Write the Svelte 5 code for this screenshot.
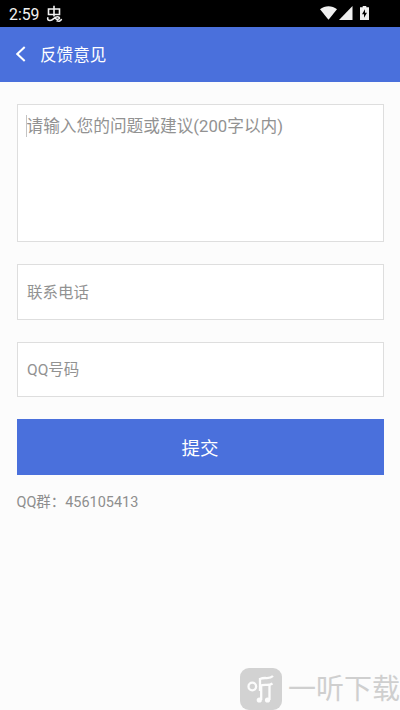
<script lang="ts">
	let content = $state('');
	let phone = $state('');
	let qq = $state('');

	function submit(e: Event) {
		e.preventDefault();
	}
</script>

<div class="page">
	<div class="status">
		<span class="time">2:59</span>
		<svg class="bug" width="17" height="18" viewBox="0 0 17 18" aria-hidden="true">
			<path d="M2.5 4h11v5.5h-11zM8 .8v10.7M2 12.2c-1 2.300.2 3.300 2 3.300 3.500 0 4-3.800 7.500-3.800 2.500 0 2.500 2.300.5 2.600-2 .2-2.500-1-2.500-1M10.500 15.800c2.500.8 4.500.5 5-2" />
		</svg>
		<div class="signals">
			<svg width="17" height="14" viewBox="0 0 17 14" aria-hidden="true">
				<path d="M0 3.2C5 -.8 12 -.8 17 3.2L8.5 13.8z" />
			</svg>
			<svg class="cell" width="14" height="14" viewBox="0 0 14 14" aria-hidden="true">
				<path d="M13.5 0v14H0z" />
			</svg>
			<svg class="battery" width="9" height="14" viewBox="0 0 9 14" aria-hidden="true">
				<path d="M2.7 0h3.6v1.3H9V14H0V1.3h2.7z" />
				<path class="bolt" d="M5 3.2L2 8.2h2v3.6l3-5H5z" />
			</svg>
		</div>
	</div>

	<header>
		<button class="back" aria-label="返回">
			<svg width="10" height="16" viewBox="0 0 10 16">
				<path d="M8.7 1L1.3 8l7.4 7" />
			</svg>
		</button>
		<h1>反馈意见</h1>
	</header>

	<form onsubmit={submit}>
		<div class="message">
			<textarea bind:value={content} maxlength="200" placeholder="请输入您的问题或建议(200字以内)"></textarea>
			<span class="caret"></span>
		</div>
		<input bind:value={phone} type="tel" placeholder="联系电话" />
		<input bind:value={qq} placeholder="QQ号码" />
		<button class="submit">提交</button>
		<p>QQ群：456105413</p>
	</form>

	<div class="watermark">
		<svg width="42" height="42" viewBox="0 0 42 42" aria-hidden="true">
			<rect width="42" height="42" rx="9" />
			<circle cx="12.3" cy="18.5" r="3.8" />
			<path d="M33 8c-4 4-8 .5-13 3M20 10v13M32.5 15.5c-4 3-8 0-12.500 2.500M21.200 17v15M29.500 17v15" />
			<circle class="note" cx="19.3" cy="32" r="2.6" />
			<circle class="note" cx="27.5" cy="32" r="2.6" />
		</svg>
		<span>一听下载</span>
	</div>
</div>

<style>
	:global(body) {
		margin: 0;
	}
	.page {
		position: relative;
		height: 710px;
		overflow: hidden;
		background: #fcfcfc;
		font-family: Roboto, 'Noto Sans CJK SC', sans-serif;
	}

	.status {
		display: flex;
		align-items: center;
		box-sizing: border-box;
		height: 27px;
		padding: 0 31px 0 9px;
		background: #000;
		color: #f2f2f2;
	}
	.time {
		width: 37px;
		padding-top: 2px;
		font-size: 15.8px;
		line-height: 25px;
	}
	.bug {
		fill: none;
		stroke: #f2f2f2;
		stroke-width: 1.6;
	}
	.signals {
		display: flex;
		align-items: center;
		margin: -1px 0 0 auto;
		fill: #f0f0f0;
	}
	.cell {
		margin-left: 2px;
	}
	.battery {
		margin-left: 7px;
	}
	.bolt {
		fill: #000;
	}

	header {
		display: flex;
		align-items: center;
		height: 55px;
		padding-left: 16px;
		background: #4a70dc;
		color: #fff;
	}
	button {
		border: 0;
		color: #fff;
		font-family: inherit;
	}
	.back {
		display: flex;
		width: 24px;
		padding: 0;
		background: none;
	}
	.back svg {
		margin-top: -1px;
		fill: none;
		stroke: #fff;
		stroke-width: 2;
	}
	h1 {
		margin: -2px 0 0;
		font-size: 16.6px;
		font-weight: 400;
	}

	form {
		display: flex;
		flex-direction: column;
		gap: 22px;
		padding: 22px 16.5px 0;
	}
	.message {
		position: relative;
		height: 138px;
	}
	textarea,
	input {
		display: block;
		box-sizing: border-box;
		width: 100%;
		margin: 0;
		border: 1px solid #dedede;
		border-radius: 0;
		outline: none;
		background: #fff;
		color: #333;
		font-family: inherit;
	}
	textarea {
		height: 100%;
		padding: 9px 9px;
		font-size: 16.7px;
		line-height: 25px;
		resize: none;
	}
	input {
		height: 55.5px;
		padding: 2px 9.5px 0;
		font-size: 15.5px;
	}
	::placeholder {
		color: #929292;
		opacity: 1;
	}
	.caret {
		position: absolute;
		top: 11px;
		left: 9.5px;
		width: 1px;
		height: 22px;
		background: #c4c4c4;
	}
	.submit {
		height: 55.5px;
		padding: 0;
		background: #4a70dc;
		font-size: 18.5px;
	}
	p {
		margin: -5px 0 0;
		color: #8e8e8e;
		font-size: 14.45px;
		line-height: 22px;
	}

	.watermark {
		position: absolute;
		left: 240px;
		bottom: 0;
		display: flex;
		align-items: center;
		height: 42px;
		color: #cfcfcf;
		font-size: 28px;
		white-space: nowrap;
	}
	.watermark span {
		margin: -4px 0 0 6px;
	}
	.watermark svg {
		fill: none;
		stroke: #fcfcfc;
		stroke-width: 2.3;
	}
	.watermark rect {
		fill: #d2d2d2;
		stroke: none;
	}
	.watermark .note {
		fill: #fcfcfc;
		stroke: none;
	}
</style>
